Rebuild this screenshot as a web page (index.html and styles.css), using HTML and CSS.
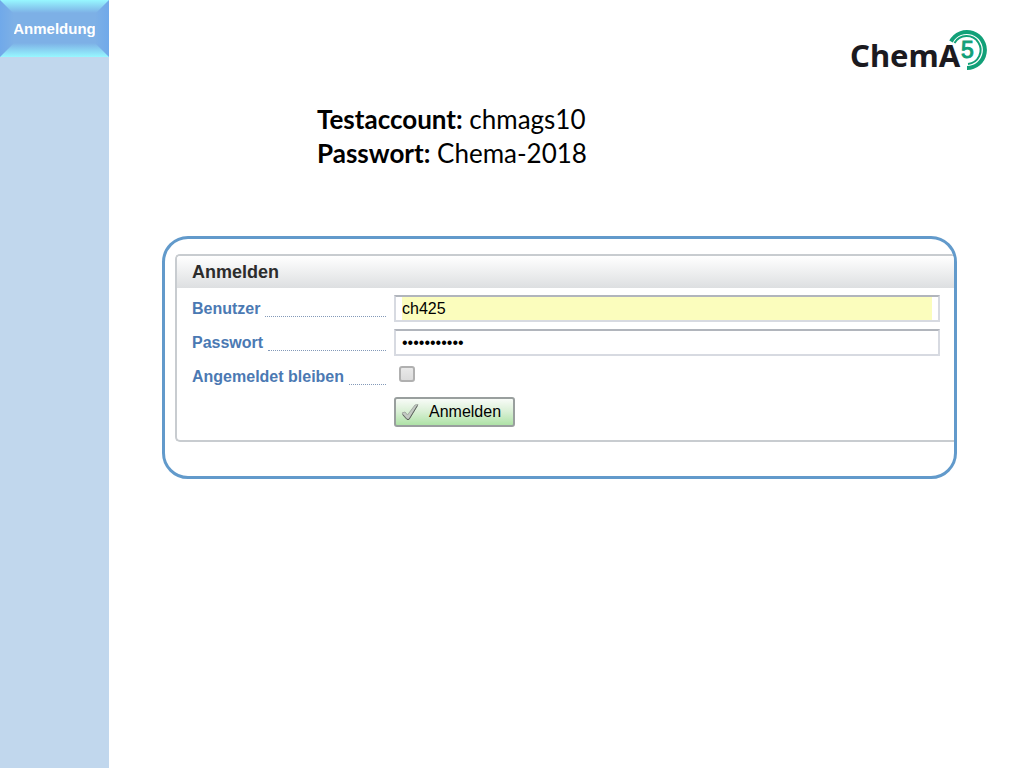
FILE: index.html
```
<!doctype html>
<html lang="de">
    <head>
        <meta charset="UTF-8" />
        <meta name="viewport" content="width=device-width, initial-scale=1.0" />
        <title>ChemA5 - Anmeldung</title>
        <link rel="stylesheet" href="styles.css">
    </head>
    <body>
        <nav class="sidebar">
            <a class="nav-item" href="#anmelden"><span>Anmeldung</span></a>
        </nav>

        <main>
            <header>
                <svg class="logo" width="138" height="50" viewBox="0 0 138 50" role="img" aria-label="ChemA5">
                    <text class="logo-name" x="0" y="39">ChemA</text>
                    <g fill="none" stroke="#12a078">
                        <path d="M101 13.5A18 18 0 1 1 117 40" stroke-width="4" />
                        <path d="M104.5 15A14 14 0 1 1 118 36" stroke-width="2" />
                    </g>
                    <text class="logo-number" x="111" y="30">5</text>
                </svg>
            </header>

            <div class="account">
                <p><strong>Testaccount:</strong> chmags10</p>
                <p><strong>Passwort:</strong> Chema-2018</p>
            </div>

            <section class="frame">
                <form class="login" id="anmelden">
                    <h1>Anmelden</h1>
                    <div class="fields">
                        <div class="row">
                            <label for="user">Benutzer</label>
                            <input class="text-field filled" id="user" type="text" value="ch425" />
                        </div>
                        <div class="row">
                            <label for="password">Passwort</label>
                            <input class="text-field" id="password" type="password" value="Chema-20180" />
                        </div>
                        <div class="row">
                            <label for="stay">Angemeldet bleiben</label>
                            <input class="check" id="stay" type="checkbox" />
                        </div>
                        <button type="button">
                            <svg width="18" height="18" viewBox="0 0 18 18" aria-hidden="true">
                                <path d="M1 10L4 9L6.5 12L14 2L17 1.5L8 16L6 16Z" fill="#c3c9c3" stroke="#a3aaa3" />
                                <path d="M1.5 11.5L6 16.5H8L16.5 2.5" fill="none" stroke="#5c625c" />
                            </svg>
                            Anmelden
                        </button>
                    </div>
                </form>
            </section>
        </main>
    </body>
</html>
```
FILE: styles.css
```
:root {
    --frame-color: #629acb;
    --label-color: #4b79b3;
    --line-color: #c8ccd0;
}

* {
    box-sizing: border-box;
}

body {
    display: flex;
    min-height: 100vh;
    margin: 0;
    background: white;
    color: black;
    font-family: "Liberation Sans", Arial, sans-serif;
    font-size: 16px;
}

.sidebar {
    flex: 0 0 109px;
    background: #c1d7ed;
}

/* bevelled button: light top and bottom edges, darker mitred sides */
.nav-item {
    position: relative;
    display: flex;
    align-items: center;
    justify-content: center;
    height: 57px;
    background: linear-gradient(#97f7ff, #7db0e6 13px, #7db0e6 43px, #97f7ff);
    color: white;
    font-size: 15px;
    font-weight: bold;
    text-decoration: none;
}

.nav-item::before,
.nav-item::after {
    content: "";
    position: absolute;
    top: 0;
    bottom: 0;
    width: 14px;
}

.nav-item::before {
    left: 0;
    background: linear-gradient(to right, #70a9ea, #7db0e6);
    clip-path: polygon(0 0, 100% 14px, 100% 43px, 0 100%);
}

.nav-item::after {
    right: 0;
    background: linear-gradient(to left, #70a9ea, #7db0e6);
    clip-path: polygon(100% 0, 0 14px, 0 43px, 100% 100%);
}

main {
    flex: 1;
    min-width: 0;
}

header {
    display: flex;
    justify-content: flex-end;
    padding: 28px 36px 0 0;
}

.logo-name {
    fill: #1b1a1f;
    font: bold 31px "Noto Sans", sans-serif;
}

.logo-number {
    fill: #12a078;
    stroke: #12a078;
    stroke-width: 1px;
    font: 23px "Liberation Sans", Arial, sans-serif;
}

.account {
    margin: 24px 0 66px 208px;
    font-family: Lato, sans-serif;
    font-size: 26px;
    line-height: 34px;
}

.account p {
    margin: 0;
}

.frame {
    margin: 0 67px 0 53px;
    padding: 15px 0 34px 10px;
    border: 3px solid var(--frame-color);
    border-radius: 26px;
    overflow: hidden;
}

.login {
    border: 2px solid var(--line-color);
    border-right: 0;
    border-radius: 5px 0 0 5px;
    overflow: hidden;
}

.login h1 {
    margin: 0;
    padding: 0 15px;
    background: linear-gradient(white, #dddfe1);
    color: #2c2c2c;
    font-size: 18px;
    line-height: 32px;
}

.fields {
    display: flex;
    flex-direction: column;
    gap: 7px;
    padding: 7px 14px 13px 15px;
}

.row {
    display: flex;
    align-items: center;
    gap: 8px;
    height: 27px;
}

.row label {
    display: flex;
    flex: 0 0 194px;
    gap: 5px;
    color: var(--label-color);
    font-weight: bold;
}

.row label::after {
    content: "";
    flex: 1;
    margin-bottom: 1px;
    border-bottom: 1px dotted #8399b8;
}

.text-field {
    flex: 1;
    min-width: 0;
    height: 27px;
    padding: 0 6px;
    border: 2px solid #d7dae1;
    border-top-color: #b1b5bc;
    background: white;
    color: black;
    font: inherit;
}

.filled {
    background: #fbfdbd content-box;
}

.check {
    appearance: none;
    width: 16px;
    height: 16px;
    margin: 0 0 6px 5px;
    border: 2px solid #b0b0b0;
    border-radius: 3px;
    background: linear-gradient(#e9e9e9, #dcdcdc);
}

button {
    display: flex;
    align-items: center;
    align-self: flex-start;
    gap: 10px;
    height: 30px;
    margin-left: 202px;
    padding: 0 12px 0 5px;
    border: 2px solid #999f9e;
    border-radius: 3px;
    background: linear-gradient(#f8fbf7, #d8efd4 50%, #aee2a6);
    color: black;
    font: inherit;
}
```
